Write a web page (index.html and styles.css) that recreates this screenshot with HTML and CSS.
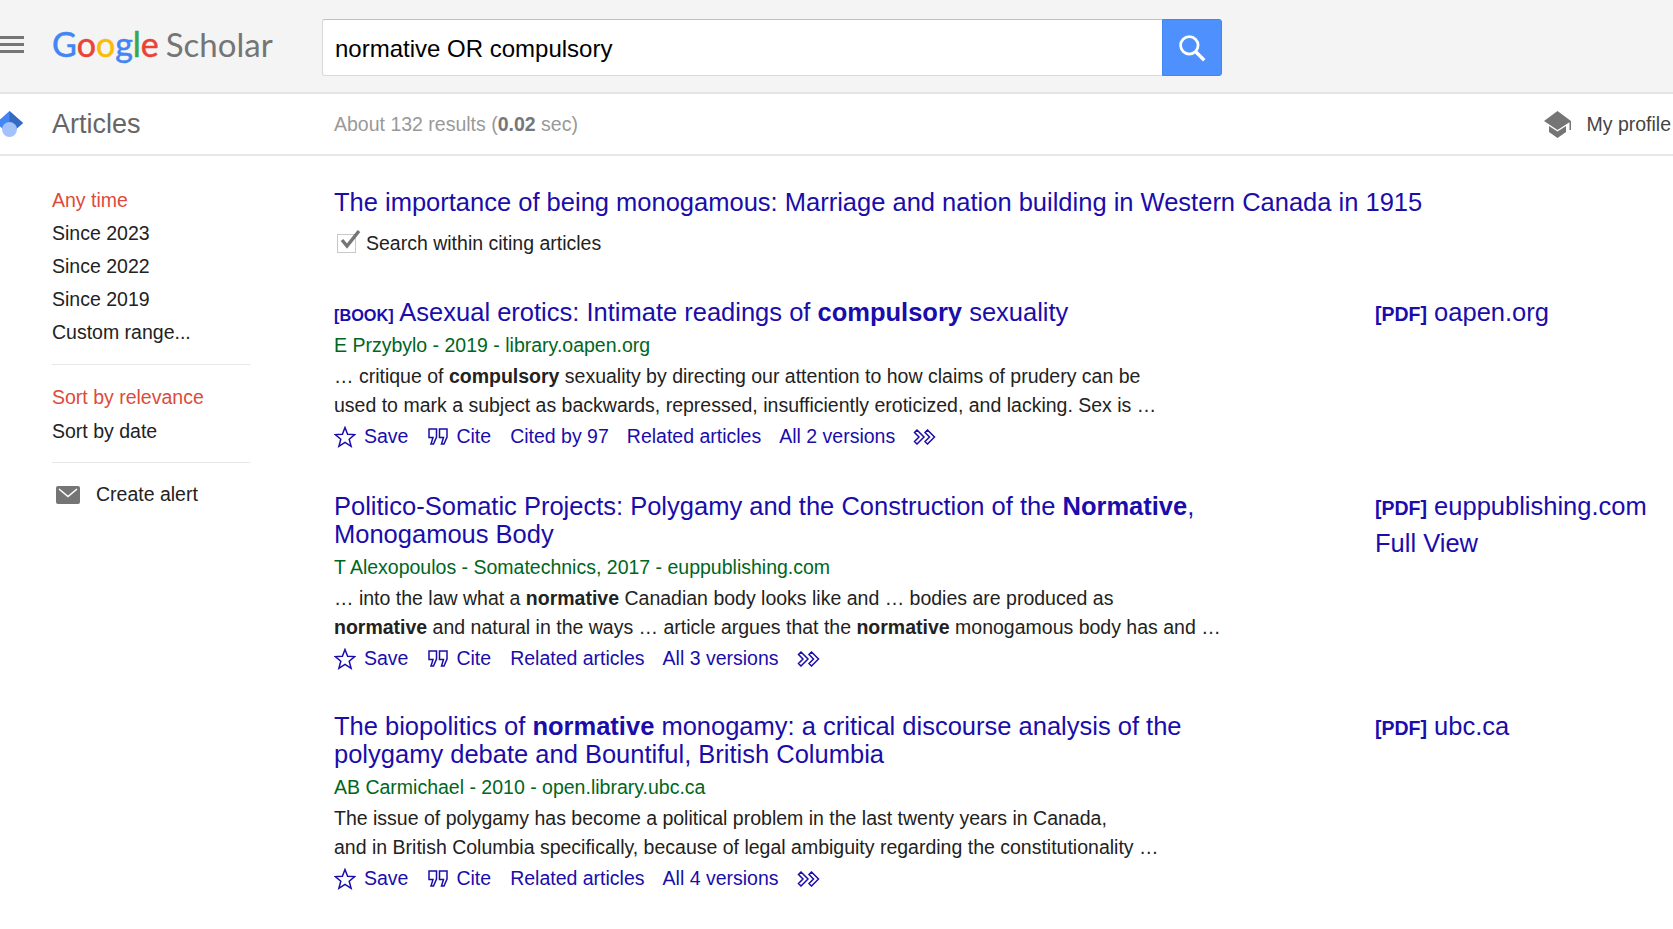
FILE: index.html
```html
<!DOCTYPE html>
<html lang="en">
<head>
    <meta charset="UTF-8">
    <title>Google Scholar</title>
    <link rel="stylesheet" href="styles.css">
</head>
<body>
    <header class="topbar">
        <div class="menu-icon"><span></span><span></span><span></span></div>
        <div class="logo"><span class="logo-word"><span class="blue">G</span><span class="red">o</span><span class="yellow">o</span><span class="blue">g</span><span class="green">l</span><span class="red">e</span></span> <span class="logo-name">Scholar</span></div>
        <form class="search">
            <div class="search-input">normative OR compulsory</div>
            <button type="button" class="search-btn">
                <svg width="32" height="32" viewBox="0 0 30 30"><circle cx="12.5" cy="12.5" r="8.2" fill="none" stroke="#fff" stroke-width="2.6"/><path d="M18.5 18.5L26.5 26.5" stroke="#fff" stroke-width="3.2"/></svg>
            </button>
        </form>
    </header>

    <div class="subbar">
        <div class="subbar-left">
            <svg class="hat-blue" width="24" height="27" viewBox="0 0 24 27"><path d="M9.5 0L23 12L9.5 24L-4 12Z" fill="#4285f4"/><path d="M9.5 0L23 12L9.5 24Z" fill="#356ac3"/><circle cx="9.5" cy="18.5" r="7.5" fill="#a1c2fa"/></svg>
            <span class="subbar-title">Articles</span>
        </div>
        <div class="result-count">About 132 results (<b>0.02</b> sec)</div>
        <div class="profile">
            <svg width="27" height="27" viewBox="0 0 27 27"><path d="M13.5 0L27 10V19H25.5V11.2L13.5 19L0 10Z" fill="#757575"/><path d="M5 15L13.5 20.5L22 15V21L13.5 27L5 21Z" fill="#757575"/></svg>
            <span>My profile</span>
        </div>
    </div>

    <div class="main">
        <aside class="sidebar">
            <ul class="side-list">
                <li class="active">Any time</li>
                <li>Since 2023</li>
                <li>Since 2022</li>
                <li>Since 2019</li>
                <li>Custom range...</li>
            </ul>
            <ul class="side-list side-sort">
                <li class="active">Sort by relevance</li>
                <li>Sort by date</li>
            </ul>
            <div class="alert">
                <svg width="24" height="18" viewBox="0 0 24 18"><rect width="24" height="18" rx="2" fill="#757575"/><path d="M3 3L12 10.5L21 3" fill="none" stroke="#fff" stroke-width="1.6"/></svg>
                <span>Create alert</span>
            </div>
        </aside>

        <section class="results">
            <a class="cited-title">The importance of being monogamous: Marriage and nation building in Western Canada in 1915</a>
            <label class="within">
                <span class="checkbox">
                    <svg width="24" height="22" viewBox="0 0 24 22"><path d="M5 11L10 17L22 2" fill="none" stroke="#757575" stroke-width="3.4"/></svg>
                </span>
                Search within citing articles
            </label>

            <article class="result first">
                <div class="result-body">
                    <h3><span class="tag">[BOOK]</span> Asexual erotics: Intimate readings of <b>compulsory</b> sexuality</h3>
                    <div class="meta">E Przybylo - 2019 - library.oapen.org</div>
                    <p>… critique of <b>compulsory</b> sexuality by directing our attention to how claims of prudery can be<br>used to mark a subject as backwards, repressed, insufficiently eroticized, and lacking. Sex is …</p>
                    <div class="actions">
                        <a class="save"><svg width="22" height="22" viewBox="0 0 22 22"><path d="M11 1.5L13.6 8.3L20.8 8.6L15.2 13.2L17.1 20.3L11 16.3L4.9 20.3L6.8 13.2L1.2 8.6L8.4 8.3Z" fill="none" stroke="#1a0dab" stroke-width="1.5"/></svg>Save</a>
                        <a class="cite"><svg width="20" height="17" viewBox="0 0 20 17"><path d="M1 1H8.5V9L5.5 16H3L5 9.5H1ZM11.5 1H19V9L16 16H13.5L15.5 9.5H11.5Z" fill="none" stroke="#1a0dab" stroke-width="1.5"/></svg>Cite</a>
                        <a>Cited by 97</a>
                        <a>Related articles</a>
                        <a>All 2 versions</a>
                        <svg class="more" width="24" height="16" viewBox="0 0 24 16"><path d="M3.5 1L10.5 8L3.5 15L1 12.5L5.5 8L1 3.5ZM14 1L21 8L14 15L11.5 12.5L16 8L11.5 3.5Z" transform="translate(1.5 0)" fill="none" stroke="#1a0dab" stroke-width="1.5"/></svg>
                    </div>
                </div>
                <div class="result-side">
                    <a><span class="tag-pdf">[PDF]</span> oapen.org</a>
                </div>
            </article>

            <article class="result">
                <div class="result-body">
                    <h3>Politico-Somatic Projects: Polygamy and the Construction of the <b>Normative</b>,<br>Monogamous Body</h3>
                    <div class="meta">T Alexopoulos - Somatechnics, 2017 - euppublishing.com</div>
                    <p>… into the law what a <b>normative</b> Canadian body looks like and … bodies are produced as<br><b>normative</b> and natural in the ways … article argues that the <b>normative</b> monogamous body has and …</p>
                    <div class="actions">
                        <a class="save"><svg width="22" height="22" viewBox="0 0 22 22"><path d="M11 1.5L13.6 8.3L20.8 8.6L15.2 13.2L17.1 20.3L11 16.3L4.9 20.3L6.8 13.2L1.2 8.6L8.4 8.3Z" fill="none" stroke="#1a0dab" stroke-width="1.5"/></svg>Save</a>
                        <a class="cite"><svg width="20" height="17" viewBox="0 0 20 17"><path d="M1 1H8.5V9L5.5 16H3L5 9.5H1ZM11.5 1H19V9L16 16H13.5L15.5 9.5H11.5Z" fill="none" stroke="#1a0dab" stroke-width="1.5"/></svg>Cite</a>
                        <a>Related articles</a>
                        <a>All 3 versions</a>
                        <svg class="more" width="24" height="16" viewBox="0 0 24 16"><path d="M3.5 1L10.5 8L3.5 15L1 12.5L5.5 8L1 3.5ZM14 1L21 8L14 15L11.5 12.5L16 8L11.5 3.5Z" transform="translate(1.5 0)" fill="none" stroke="#1a0dab" stroke-width="1.5"/></svg>
                    </div>
                </div>
                <div class="result-side">
                    <a><span class="tag-pdf">[PDF]</span> euppublishing.com</a>
                    <a>Full View</a>
                </div>
            </article>

            <article class="result last">
                <div class="result-body">
                    <h3>The biopolitics of <b>normative</b> monogamy: a critical discourse analysis of the<br>polygamy debate and Bountiful, British Columbia</h3>
                    <div class="meta">AB Carmichael - 2010 - open.library.ubc.ca</div>
                    <p>The issue of polygamy has become a political problem in the last twenty years in Canada,<br>and in British Columbia specifically, because of legal ambiguity regarding the constitutionality …</p>
                    <div class="actions">
                        <a class="save"><svg width="22" height="22" viewBox="0 0 22 22"><path d="M11 1.5L13.6 8.3L20.8 8.6L15.2 13.2L17.1 20.3L11 16.3L4.9 20.3L6.8 13.2L1.2 8.6L8.4 8.3Z" fill="none" stroke="#1a0dab" stroke-width="1.5"/></svg>Save</a>
                        <a class="cite"><svg width="20" height="17" viewBox="0 0 20 17"><path d="M1 1H8.5V9L5.5 16H3L5 9.5H1ZM11.5 1H19V9L16 16H13.5L15.5 9.5H11.5Z" fill="none" stroke="#1a0dab" stroke-width="1.5"/></svg>Cite</a>
                        <a>Related articles</a>
                        <a>All 4 versions</a>
                        <svg class="more" width="24" height="16" viewBox="0 0 24 16"><path d="M3.5 1L10.5 8L3.5 15L1 12.5L5.5 8L1 3.5ZM14 1L21 8L14 15L11.5 12.5L16 8L11.5 3.5Z" transform="translate(1.5 0)" fill="none" stroke="#1a0dab" stroke-width="1.5"/></svg>
                    </div>
                </div>
                <div class="result-side">
                    <a><span class="tag-pdf">[PDF]</span> ubc.ca</a>
                </div>
            </article>
        </section>
    </div>
</body>
</html>
```

FILE: styles.css
```css
* {
    box-sizing: border-box;
}
html, body {
    height: 100%;
    overflow: hidden;
}
body {
    margin: 0;
    font-family: "Liberation Sans", Arial, sans-serif;
    font-size: 19.5px;
    color: #222;
    background-color: #fff;
}

/* top bar */
.topbar {
    display: flex;
    align-items: center;
    height: 94px;
    background-color: #f4f4f4;
    border-bottom: 2px solid #e5e5e5;
}
.menu-icon {
    display: flex;
    flex-direction: column;
    gap: 4px;
    width: 24px;
    margin-top: -4px;
}
.menu-icon span {
    height: 3px;
    background-color: #757575;
}
.logo {
    width: 270px;
    margin-left: 28px;
    margin-top: -6px;
    font-family: Lato, sans-serif;
    white-space: nowrap;
}
.logo-word {
    font-size: 34px;
    -webkit-text-stroke: 0.5px;
}
.blue { color: #4285f4; }
.red { color: #ea4335; }
.yellow { color: #fbbc05; }
.green { color: #34a853; }
.logo-name {
    margin-left: 2px;
    font-size: 33px;
    color: #757575;
}
.search {
    display: flex;
    height: 57px;
    margin-top: 3px;
}
.search-input {
    width: 840px;
    padding-left: 12px;
    line-height: 57px;
    font-size: 24px;
    color: #000;
    background-color: #fff;
    border: 1px solid #d9d9d9;
    border-top-color: #c0c0c0;
    border-right: none;
    border-radius: 3px 0 0 3px;
}
.search-btn {
    display: flex;
    align-items: center;
    justify-content: center;
    width: 60px;
    padding: 0;
    background-color: #4d90fe;
    border: 1px solid #4285f4;
    border-radius: 0 3px 3px 0;
}

/* articles bar */
.subbar {
    display: flex;
    align-items: center;
    height: 62px;
    border-bottom: 2px solid #e8e8e8;
}
.subbar-left {
    display: flex;
    align-items: center;
    width: 334px;
}
.hat-blue {
    margin-right: 28px;
}
.subbar-title {
    font-size: 27px;
    color: #666;
}
.result-count {
    flex: 1;
    color: #999;
}
.result-count b {
    color: #777;
}
.profile {
    display: flex;
    align-items: center;
    gap: 15px;
    margin-right: 2px;
    color: #444;
}

/* main layout */
.main {
    display: flex;
}
.sidebar {
    width: 334px;
    padding: 28px 0 0 52px;
    flex-shrink: 0;
}
.side-list {
    width: 198px;
    margin: 0;
    padding: 0 0 15px;
    list-style: none;
    border-bottom: 1px solid #e8e8e8;
}
.side-list li {
    height: 33px;
    line-height: 33px;
    white-space: nowrap;
}
.side-list .active {
    color: #dd4b39;
}
.side-sort {
    padding-top: 15px;
    padding-bottom: 14px;
}
.side-sort li {
    height: 34px;
    line-height: 34px;
}
.alert {
    display: flex;
    align-items: center;
    gap: 16px;
    padding: 20px 0 0 4px;
}

/* results */
.results {
    flex: 1;
    padding-top: 28px;
    color: #222;
}
a {
    color: #1a0dab;
}
.cited-title {
    display: block;
    font-size: 25.5px;
    line-height: 36px;
}
.within {
    display: flex;
    align-items: center;
    height: 30px;
    margin-top: 8px;
}
.checkbox {
    position: relative;
    width: 19px;
    height: 19px;
    margin: 0 10px 0 3px;
    border: 1px solid #c8c8c8;
}
.checkbox svg {
    position: absolute;
    left: -1px;
    top: -6px;
}
.result {
    display: flex;
    margin-top: 40px;
}
.result.last {
    margin-top: 38px;
}
.result-body {
    width: 1041px;
    flex-shrink: 0;
}
.result h3 {
    margin: 0;
    font-size: 25.5px;
    font-weight: normal;
    line-height: 28.5px;
    color: #1a0dab;
    white-space: nowrap;
}
.tag {
    font-size: 16.3px;
    font-weight: bold;
    line-height: 1;
}
.meta {
    margin-top: 3px;
    line-height: 30px;
    color: #006621;
}
.result p {
    margin: 2px 0 0;
    line-height: 29px;
    white-space: nowrap;
}
.actions {
    display: flex;
    align-items: center;
    gap: 18px;
    height: 30px;
    margin-top: 2px;
}
.actions a {
    display: flex;
    align-items: center;
    white-space: nowrap;
}
.save {
    margin-right: 2px;
}
.save svg {
    margin-right: 8px;
}
.cite {
    margin-right: 1px;
}
.cite svg {
    margin-right: 8px;
}
.more {
    margin-left: -1px;
}
.result-side {
    display: flex;
    flex-direction: column;
    gap: 6px;
    font-size: 25.5px;
    line-height: 29px;
    white-space: nowrap;
}
.tag-pdf {
    font-size: 19.5px;
    font-weight: bold;
}
```
